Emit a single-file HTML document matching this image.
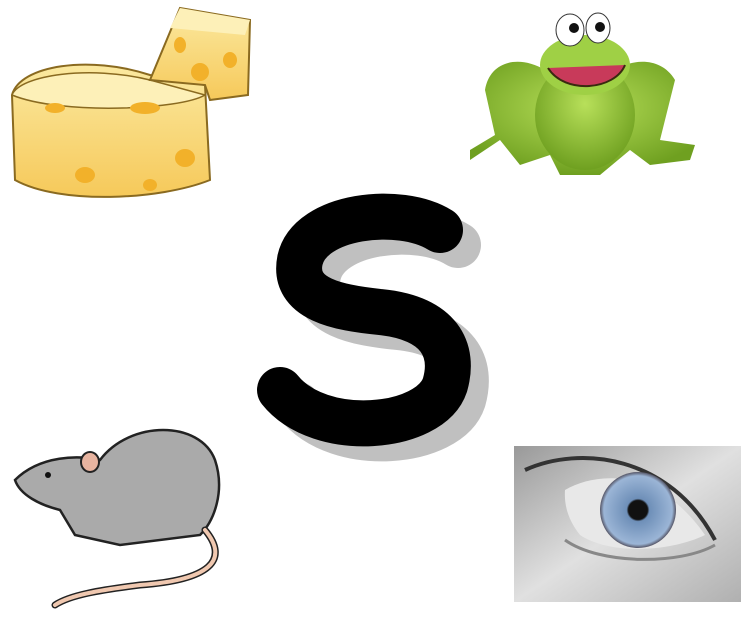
<!DOCTYPE html><html><head><style>body{margin:0;background:#fff;width:741px;height:616px;overflow:hidden}</style></head><body>
<svg width="741" height="616" viewBox="0 0 741 616" xmlns="http://www.w3.org/2000/svg">
<defs>
<radialGradient id="iris" cx="0.5" cy="0.5" r="0.5"><stop offset="0.25" stop-color="#111"/><stop offset="0.3" stop-color="#6e8fb8"/><stop offset="0.9" stop-color="#9bb5d6"/><stop offset="1" stop-color="#556"/></radialGradient>
<linearGradient id="skin" x1="0" y1="0" x2="1" y2="1"><stop offset="0" stop-color="#999"/><stop offset="0.5" stop-color="#e0e0e0"/><stop offset="1" stop-color="#b0b0b0"/></linearGradient>
<linearGradient id="ch" x1="0" y1="0" x2="0" y2="1"><stop offset="0" stop-color="#fbe9a0"/><stop offset="1" stop-color="#f6c95a"/></linearGradient>
<radialGradient id="fr" cx="0.5" cy="0.4" r="0.6"><stop offset="0" stop-color="#b8e05a"/><stop offset="1" stop-color="#6fa020"/></radialGradient>
</defs>
<path d="M458 245 C418 220,328 230,318 275 C310 315,358 323,398 327 C458 333,473 365,463 400 C448 445,338 455,298 405" fill="none" stroke="#c0c0c0" stroke-width="46" stroke-linecap="round"/>
<path d="M440 230 C400 205,310 215,300 260 C292 300,340 308,380 312 C440 318,455 350,445 385 C430 430,320 440,280 390" fill="none" stroke="#000" stroke-width="46" stroke-linecap="round"/>
<path d="M12 95 C20 65,90 55,150 75 L205 85 L210 180 C160 200,60 205,15 180 Z" fill="url(#ch)" stroke="#8a6a20" stroke-width="2"/>
<path d="M12 95 C20 75,90 65,150 80 L205 95 C180 110,60 115,12 95Z" fill="#fdf0b8" stroke="#8a6a20" stroke-width="1.5"/>
<path d="M150 80 L180 8 L250 20 L248 95 L210 100 L205 85 Z" fill="url(#ch)" stroke="#8a6a20" stroke-width="2"/>
<path d="M180 8 L250 20 L245 35 L170 28Z" fill="#fdf0b8"/>
<g fill="#f2b12a"><ellipse cx="55" cy="108" rx="10" ry="5"/><ellipse cx="145" cy="108" rx="15" ry="6"/><ellipse cx="85" cy="175" rx="10" ry="8"/><ellipse cx="185" cy="158" rx="10" ry="9"/><ellipse cx="200" cy="72" rx="9" ry="9"/><ellipse cx="230" cy="60" rx="7" ry="8"/><ellipse cx="180" cy="45" rx="6" ry="8"/><ellipse cx="150" cy="185" rx="7" ry="6"/></g>
<path d="M470 160 L500 140 L520 165 L550 155 L560 175 L600 175 L630 150 L650 165 L690 160 L695 145 L660 140 L675 80 C660 55,630 60,615 70 L545 70 C520 55,490 60,485 90 L495 135 L470 150Z" fill="url(#fr)"/>
<ellipse cx="585" cy="115" rx="50" ry="55" fill="url(#fr)"/>
<ellipse cx="585" cy="65" rx="45" ry="30" fill="#9fd045"/>
<ellipse cx="570" cy="30" rx="14" ry="16" fill="#fff" stroke="#333"/><ellipse cx="598" cy="28" rx="12" ry="15" fill="#fff" stroke="#333"/>
<circle cx="574" cy="28" r="5" fill="#111"/><circle cx="600" cy="27" r="5" fill="#111"/>
<path d="M548 68 C565 95,615 90,625 65" fill="#c83a5a" stroke="#3a2a10" stroke-width="2"/>
<path d="M15 480 C40 455,80 455,100 460 C130 420,200 420,215 460 C225 490,215 520,200 535 L120 545 L75 535 L60 510 C40 505,20 495,15 480Z" fill="#aaa" stroke="#222" stroke-width="2.5"/>
<ellipse cx="90" cy="462" rx="9" ry="10" fill="#e8b4a0" stroke="#222" stroke-width="2"/>
<circle cx="48" cy="475" r="3" fill="#111"/>
<path d="M205 530 C230 560,210 580,140 585 C100 590,70 595,55 605" fill="none" stroke="#222" stroke-width="7" stroke-linecap="round"/>
<path d="M205 530 C230 560,210 580,140 585 C100 590,70 595,55 605" fill="none" stroke="#f0c8b0" stroke-width="4" stroke-linecap="round"/>
<rect x="514" y="446" width="227" height="156" fill="url(#skin)"/>
<path d="M565 490 C600 470,660 470,705 535 C670 552,610 555,580 535 C568 520,564 505,565 490Z" fill="#e8e8e8"/>
<path d="M525 470 C580 445,670 455,715 540" fill="none" stroke="#333" stroke-width="4"/>
<circle cx="638" cy="510" r="38" fill="url(#iris)"/>
<path d="M565 540 C600 565,680 565,715 545" fill="none" stroke="#888" stroke-width="3"/>
</svg>
</body></html>
